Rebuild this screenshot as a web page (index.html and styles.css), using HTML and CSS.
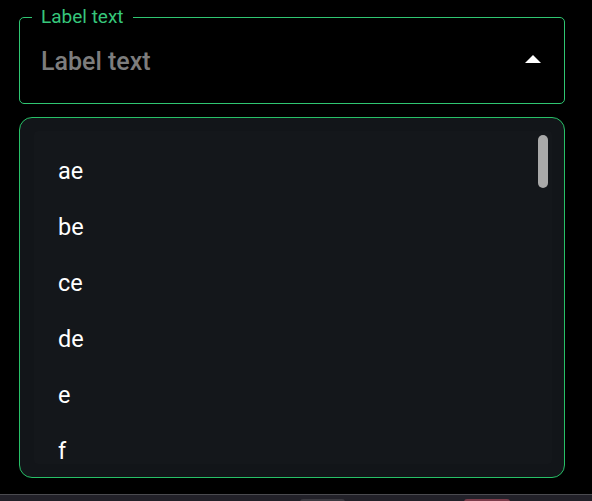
FILE: index.html
```html
<!DOCTYPE html>
<html lang="en">
<head>
<meta charset="utf-8">
<title>Select</title>
<link rel="stylesheet" href="styles.css">
</head>
<body>
<div class="page">
  <div class="field">
    <span class="field-label">Label text</span>
    <span class="placeholder">Label text</span>
    <svg class="arrow" width="16" height="8" viewBox="0 0 16 8"><polygon points="0,8 16,8 8,0" fill="#fff"/></svg>
  </div>
  <div class="dropdown">
    <div class="list">
      <div class="item">ae</div>
      <div class="item">be</div>
      <div class="item">ce</div>
      <div class="item">de</div>
      <div class="item">e</div>
      <div class="item">f</div>
      <div class="thumb"></div>
    </div>
  </div>
</div>
<div class="taskbar">
  <span class="tb-gray"></span>
  <span class="tb-red"></span>
</div>
</body>
</html>
```
FILE: styles.css
```css
html, body {
  margin: 0;
  padding: 0;
  background: #000;
  height: 501px;
  overflow: hidden;
  font-family: Roboto, "Noto Sans", sans-serif;
}
.page {
  padding: 17px 27px 0 19px;
  height: 477px;
}
.field {
  position: relative;
  height: 87px;
  box-sizing: border-box;
  border: 1px solid #2fc672;
  border-radius: 5px;
  display: flex;
  align-items: center;
  justify-content: space-between;
  padding: 2px 23px 0 21px;
}
.field-label {
  position: absolute;
  top: -12px;
  left: 12px;
  padding: 0 9px;
  background: #000;
  color: #36c77b;
  font-size: 19px;
  line-height: 22px;
}
.placeholder {
  color: #7d7d7d;
  font-size: 25px;
  font-weight: 500;
  line-height: 30px;
}
.arrow {
  display: block;
  margin-top: -6px;
}
.dropdown {
  margin-top: 13px;
  height: 361px;
  box-sizing: border-box;
  border: 1px solid #27c067;
  border-radius: 13px;
  background: #121519;
  padding: 13px 12px 13px 14px;
}
.list {
  position: relative;
  height: 100%;
  overflow: hidden;
  background: #14171b;
  border-radius: 4px;
  padding-top: 12px;
  box-sizing: border-box;
}
.item {
  height: 56px;
  display: flex;
  align-items: center;
  padding-left: 24px;
  color: #fff;
  font-size: 23.5px;
}
.thumb {
  position: absolute;
  top: 4px;
  right: 4px;
  width: 10px;
  height: 53px;
  border-radius: 5px;
  background: #a9a9a9;
}
.taskbar {
  height: 7px;
  border-top: 1px solid #4b4b50;
  background: #222129;
  display: flex;
}
.tb-gray {
  margin: 4px 0 0 300px;
  width: 45px;
  height: 3px;
  border-radius: 3px 3px 0 0;
  background: #3b3a41;
}
.tb-red {
  margin: 4px 0 0 119px;
  width: 46px;
  height: 3px;
  border-radius: 3px 3px 0 0;
  background: #7b3c4a;
}
```
